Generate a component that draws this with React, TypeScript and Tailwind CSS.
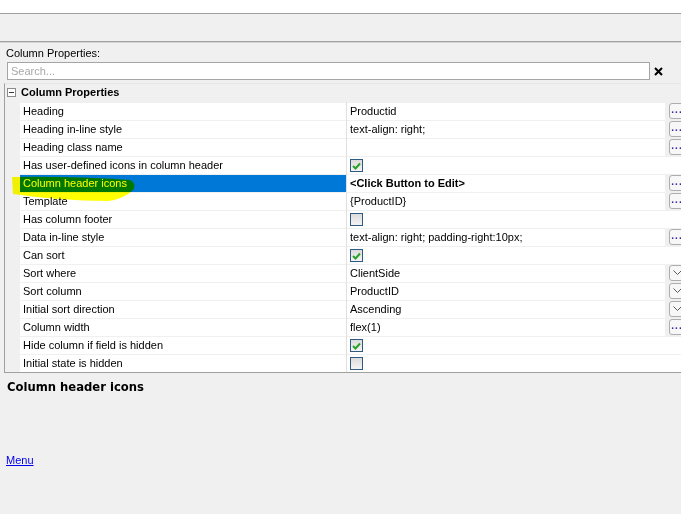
import React from 'react';

type Kind = 'text' | 'check' | 'select';

interface Row {
  name: string;
  value?: string;
  kind: Kind;
  checked?: boolean;
  button?: boolean;
  selected?: boolean;
}

const rows: Row[] = [
  { name: 'Heading', value: 'Productid', kind: 'text', button: true },
  { name: 'Heading in-line style', value: 'text-align: right;', kind: 'text', button: true },
  { name: 'Heading class name', value: '', kind: 'text', button: true },
  { name: 'Has user-defined icons in column header', kind: 'check', checked: true },
  { name: 'Column header icons', value: '<Click Button to Edit>', kind: 'text', button: true, selected: true },
  { name: 'Template', value: '{ProductID}', kind: 'text', button: true },
  { name: 'Has column footer', kind: 'check', checked: false },
  { name: 'Data in-line style', value: 'text-align: right; padding-right:10px;', kind: 'text', button: true },
  { name: 'Can sort', kind: 'check', checked: true },
  { name: 'Sort where', value: 'ClientSide', kind: 'select' },
  { name: 'Sort column', value: 'ProductID', kind: 'select' },
  { name: 'Initial sort direction', value: 'Ascending', kind: 'select' },
  { name: 'Column width', value: 'flex(1)', kind: 'text', button: true },
  { name: 'Hide column if field is hidden', kind: 'check', checked: true },
  { name: 'Initial state is hidden', kind: 'check', checked: false },
];

function CheckBox({ checked }: { checked?: boolean }) {
  return (
    <div className="w-[13px] h-[13px] border border-[#2f5a82] bg-gradient-to-b from-[#dcdcdc] to-[#f4f4f4] flex items-center justify-center">
      {checked && (
        <svg width="9" height="8" viewBox="0 0 9 8">
          <path d="M1 4 L3.5 6.5 L8 1.5" stroke="#2aa12a" strokeWidth="2" fill="none" />
        </svg>
      )}
    </div>
  );
}

function EditButton({ kind }: { kind: 'dots' | 'chevron' }) {
  return (
    <div className="ml-[4px] -mr-[4px] w-[16px] h-[16px] shrink-0 rounded-[3px] border border-[#adadad] bg-[#f7f7f7] flex items-center justify-center">
      {kind === 'dots' ? (
        <span className="text-[#3b2aa0] text-[10px] leading-none tracking-[1px] -mt-[3px] font-bold">...</span>
      ) : (
        <svg width="9" height="6" viewBox="0 0 9 6">
          <path d="M0.5 0.5 L4.5 4.5 L8.5 0.5" stroke="#5a5a5a" strokeWidth="1" fill="none" />
        </svg>
      )}
    </div>
  );
}

function GridRow({ row }: { row: Row }) {
  const hasButton = row.button || row.kind === 'select';
  return (
    <div className="flex h-[18px]">
      <div className="w-[15px] shrink-0" />
      <div
        className={
          row.selected
            ? 'w-[326px] shrink-0 bg-[#0078d7] text-white pl-[3px] flex items-center border-t border-[#f0f0f0]'
            : 'w-[326px] shrink-0 bg-white pl-[3px] flex items-center border-t border-[#f0f0f0]'
        }
      >
        {row.name}
      </div>
      <div className="flex-1 flex items-center border-l border-[#e0e0e0] min-w-0">
        <div
          className={
            'h-full flex-1 bg-white pl-[3px] flex items-center border-t border-[#f0f0f0] whitespace-nowrap ' +
            (row.selected ? 'font-bold' : '')
          }
        >
          {row.kind === 'check' ? <CheckBox checked={row.checked} /> : row.value}
        </div>
        {hasButton && <EditButton kind={row.kind === 'select' ? 'chevron' : 'dots'} />}
      </div>
    </div>
  );
}

export default function App() {
  return (
    <div className="relative w-[681px] h-[514px] overflow-hidden bg-[#f0f0f0] text-[11px] text-black font-['Liberation_Sans',Arial,sans-serif]">
      <div className="h-[13px] bg-white" />
      <div className="h-[28px] border-t border-[#a0a0a0]" />
      <div className="border-t border-[#a0a0a0] border-b border-b-[#d4d4d4]" />

      <div className="px-[6px] pt-[3px] leading-[14px]">Column Properties:</div>

      <div className="flex items-center pl-[7px] mt-[2px]">
        <div className="w-[643px] h-[18px] bg-white border border-[#a5a5a5] flex items-center pl-[3px] text-[#a8a8a8]">
          Search...
        </div>
        <svg width="9" height="9" viewBox="0 0 9 9" className="ml-[4px]">
          <path d="M1 1 L8 8 M8 1 L1 8" stroke="#000" strokeWidth="2" />
        </svg>
      </div>

      <div className="ml-[4px] mt-[3px] border-l border-b border-t border-[#a0a0a0] border-t-[#e6e6e6]">
        <div className="flex items-center h-[18px] pb-[2px]">
          <div className="w-[9px] h-[9px] ml-[2px] border border-[#8c8c8c] bg-white flex items-center justify-center">
            <div className="w-[5px] h-[1px] bg-[#3a3a3a]" />
          </div>
          <span className="ml-[5px] font-bold">Column Properties</span>
        </div>
        {rows.map((r) => (
          <GridRow key={r.name} row={r} />
        ))}
      </div>

      <div className="px-[7px] mt-[6px] font-['DejaVu_Sans',Verdana,sans-serif] font-bold text-[11.6px]">
        Column header icons
      </div>

      <div className="px-[6px] mt-[56px]">
        <a href="#" className="text-[#0000ee] underline">Menu</a>
      </div>

      <svg
        className="absolute left-0 top-0 pointer-events-none mix-blend-multiply"
        width="681"
        height="514"
        viewBox="0 0 681 514"
      >
        <path
          d="M12 177 Q70 176 130 180 Q137 184 133 190 Q124 199 108 201 Q60 201 13 194 Z"
          fill="#ffff00"
        />
      </svg>
    </div>
  );
}
